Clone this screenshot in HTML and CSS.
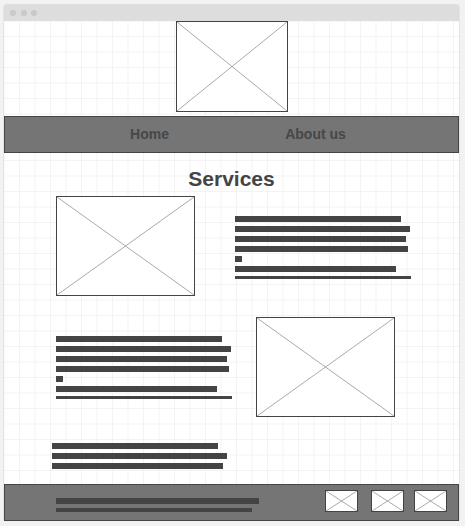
FILE: index.html
```html
<!DOCTYPE html>
<html>
<head>
<meta charset="utf-8">
<link rel="stylesheet" href="styles.css">
</head>
<body>
<div class="frame">
  <div class="titlebar"><span class="dot"></span><span class="dot"></span><span class="dot"></span></div>
  <div class="page">
    <div class="ph logo"><svg viewBox="0 0 100 100" preserveAspectRatio="none"><line x1="0" y1="0" x2="100" y2="100"/><line x1="100" y1="0" x2="0" y2="100"/></svg></div>
    <nav class="nav"><a class="nav-item">Home</a><a class="nav-item">About us</a></nav>
    <h1 class="title">Services</h1>
    <section class="row row1">
      <div class="ph big"><svg viewBox="0 0 100 100" preserveAspectRatio="none"><line x1="0" y1="0" x2="100" y2="100"/><line x1="100" y1="0" x2="0" y2="100"/></svg></div>
      <div class="text">
        <span class="bar w1"></span><span class="bar w2"></span><span class="bar w3"></span><span class="bar w4"></span><span class="bar w5"></span><span class="bar w6"></span><span class="bar thin w7"></span>
      </div>
    </section>
    <section class="row row2">
      <div class="text">
        <span class="bar w1"></span><span class="bar w2"></span><span class="bar w3"></span><span class="bar w4"></span><span class="bar w5"></span><span class="bar w6"></span><span class="bar thin w7"></span>
      </div>
      <div class="ph big"><svg viewBox="0 0 100 100" preserveAspectRatio="none"><line x1="0" y1="0" x2="100" y2="100"/><line x1="100" y1="0" x2="0" y2="100"/></svg></div>
    </section>
    <div class="text block3">
      <span class="bar w1"></span><span class="bar w2"></span><span class="bar w3"></span>
    </div>
    <footer class="footer">
      <div class="foot-text"><span class="bar f1"></span><span class="bar f2"></span></div>
      <div class="icons">
        <div class="ph icon"><svg viewBox="0 0 100 100" preserveAspectRatio="none"><line x1="0" y1="0" x2="100" y2="100"/><line x1="100" y1="0" x2="0" y2="100"/></svg></div>
        <div class="ph icon i2"><svg viewBox="0 0 100 100" preserveAspectRatio="none"><line x1="0" y1="0" x2="100" y2="100"/><line x1="100" y1="0" x2="0" y2="100"/></svg></div>
        <div class="ph icon i3"><svg viewBox="0 0 100 100" preserveAspectRatio="none"><line x1="0" y1="0" x2="100" y2="100"/><line x1="100" y1="0" x2="0" y2="100"/></svg></div>
      </div>
    </footer>
  </div>
</div>
</body>
</html>
```

FILE: styles.css
```css
html, body {
  margin: 0;
  padding: 0;
  background: #f2f2f2;
  font-family: "Liberation Sans", Arial, sans-serif;
}
.frame {
  margin: 4px 0 0 3px;
  width: 457px;
  box-sizing: border-box;
  border-left: 1px solid #e4e4e4;
  border-right: 1px solid #e4e4e4;
  border-radius: 4px 4px 0 0;
}
.titlebar {
  height: 17px;
  background: #dddddd;
  border-radius: 3px 3px 0 0;
  display: flex;
  align-items: center;
  padding-left: 6px;
  gap: 4.5px;
}
.dot {
  width: 6px;
  height: 6px;
  border-radius: 50%;
  background: #c9c9c9;
}
.page {
  background-color: #fff;
  background-image:
    linear-gradient(#f3f3f3 1px, transparent 1px),
    linear-gradient(90deg, #f3f3f3 1px, transparent 1px);
  background-size: 15.5px 15.5px;
  background-position: 15px 15px;
  display: flex;
  flex-direction: column;
}
.ph {
  box-sizing: border-box;
  border: 1px solid #444;
  background: #fff;
  flex-shrink: 0;
}
.ph svg {
  display: block;
  width: 100%;
  height: 100%;
}
.ph line {
  stroke: #aaaaaa;
  stroke-width: 1;
  vector-effect: non-scaling-stroke;
}
.logo {
  width: 112px;
  height: 91px;
  align-self: center;
  margin-left: 1px;
}
.nav {
  margin-top: 4px;
  height: 37px;
  box-sizing: border-box;
  background: #757575;
  border: 1px solid #444;
  display: flex;
  justify-content: center;
  padding-left: 2px;
}
.nav-item {
  width: 166px;
  text-align: center;
  font-size: 14px;
  font-weight: bold;
  line-height: 35px;
  color: #474747;
}
.title {
  margin: 14px 0 0;
  font-size: 21px;
  line-height: 24px;
  font-weight: bold;
  text-align: center;
  color: #444;
}
.row {
  display: flex;
  align-items: flex-start;
  padding-left: 52px;
}
.row1 { margin-top: 5px; }
.row2 { margin-top: 21px; }
.big {
  width: 139px;
  height: 100px;
}
.text {
  width: 176px;
  flex-shrink: 0;
  display: flex;
  flex-direction: column;
}
.row1 .text { margin-left: 40px; margin-top: 20px; }
.row2 .text { margin-top: 19px; }
.row2 .big { margin-left: 24px; }
.bar {
  display: block;
  height: 6px;
  background: #444;
  margin-bottom: 4px;
}
.bar.thin { height: 3px; margin-bottom: 0; }
.w1 { width: 166px; }
.w2 { width: 175px; }
.w3 { width: 171px; }
.w4 { width: 173px; }
.w5 { width: 7px; }
.w6 { width: 161px; }
.w7 { width: 176px; }
.block3 {
  margin: 26px 0 0 48px;
}
.block3 .bar:last-child { margin-bottom: 0; }
.footer {
  margin-top: 15px;
  height: 37px;
  box-sizing: border-box;
  background: #757575;
  border: 1px solid #444;
  display: flex;
  align-items: flex-start;
}
.foot-text {
  margin: 13px 0 0 51px;
}
.f1 { width: 203px; }
.f2 { width: 196px; height: 4px; margin-bottom: 0; }
.icons {
  margin-left: auto;
  margin-right: 11px;
  margin-top: 5px;
  display: flex;
}
.icon {
  width: 33px;
  height: 22px;
}
.i2 { margin-left: 13px; }
.i3 { margin-left: 10px; }
```
